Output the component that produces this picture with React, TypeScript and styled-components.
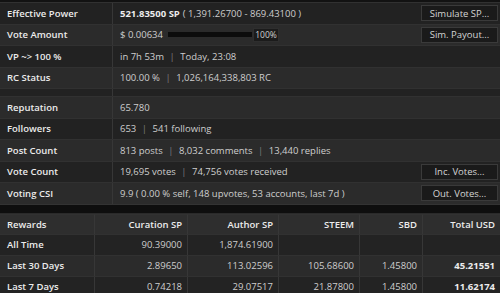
import React from 'react';
import styled, {createGlobalStyle, css} from 'styled-components';

const GlobalStyle = createGlobalStyle`
    body {
        margin: 0;
        background: #121212;
        font-family: "Open Sans", "Liberation Sans", sans-serif;
        font-size: 9.5px;
        color: #cecece;
    }
`;

const Page = styled.div`
    width: 500px;
    padding-top: 2px;
`;

const InfoTable = styled.div`
    display: flex;
    flex-direction: column;
`;

const Row = styled.div<{$light?: boolean; $h?: number}>`
    display: flex;
    box-sizing: border-box;
    height: ${(p) => p.$h ?? 21.5}px;
    background: ${(p) => (p.$light ? '#2b2b2b' : '#222222')};
    border-top: 1px solid #313131;
`;

const Label = styled.div`
    width: 113px;
    flex: none;
    box-sizing: border-box;
    display: flex;
    align-items: center;
    padding-left: 7px;
    border-right: 1px solid #373737;
    font-weight: 600;
    color: #ececec;
`;

const Value = styled.div`
    flex: 1;
    display: flex;
    align-items: center;
    padding: 0 2px 0 7px;
    white-space: nowrap;
`;

const Strong = styled.b`
    font-weight: 700;
    color: #ececec;
    margin-right: 3px;
`;

const Sep = styled.span`
    margin: 0 5.5px;
    color: #7c7c7c;
`;

const ActionButton = styled.button`
    margin-left: auto;
    width: 77px;
    height: 16px;
    padding: 0;
    background: #1a1a1a;
    border: 1px solid #3a3a3a;
    border-radius: 0;
    color: #d4d4d4;
    font: inherit;
`;

const VoteBar = styled.div`
    width: 84px;
    height: 5px;
    margin-left: 5px;
    background: #0c0c0c;
`;

const Percent = styled.div`
    margin-left: 1px;
    width: 26px;
    height: 14px;
    box-sizing: border-box;
    display: flex;
    align-items: center;
    justify-content: center;
    background: #1b1b1b;
    border: 1px solid #2e2e2e;
    font-size: 8.5px;
    color: #d0d0d0;
`;

const Band = styled.div`
    height: 10px;
    background: #0e0e0e;
    border-top: 1px solid #333;
    border-bottom: 1px solid #2a2a2a;
    box-sizing: border-box;
`;

const RewardsGrid = styled.div`
    display: grid;
    grid-template-columns: 95px 93px 91px 81px 63px 77px;
`;

const Cell = styled.div<{$bg: string; $head?: boolean; $bold?: boolean; $left?: boolean; $h: number}>`
    box-sizing: border-box;
    height: ${(p) => p.$h}px;
    display: flex;
    align-items: center;
    justify-content: ${(p) => (p.$left ? 'flex-start' : 'flex-end')};
    padding: 0 5px 0 7px;
    background: ${(p) => p.$bg};
    border-right: 1px solid #373737;
    border-top: 1px solid #313131;
    white-space: nowrap;
    ${(p) => (p.$head || p.$left) && css`
        font-weight: 600;
        color: #ececec;
    `}
    ${(p) => p.$bold && css`
        font-weight: 700;
        color: #ececec;
    `}
    &:nth-child(6n) {
        border-right: 0;
    }
`;

const headers = ['Rewards', 'Curation SP', 'Author SP', 'STEEM', 'SBD', 'Total USD'];

const rewards = [
    ['All Time', '90.39000', '1,874.61900', '', '', ''],
    ['Last 30 Days', '2.89650', '113.02596', '105.68600', '1.45800', '45.21551'],
    ['Last 7 Days', '0.74218', '29.07517', '21.87800', '1.45800', '11.62174'],
];

export default function App() {
    return (
        <Page>
            <GlobalStyle />
            <InfoTable>
                <Row>
                    <Label>Effective Power</Label>
                    <Value>
                        <Strong>521.83500 SP</Strong>( 1,391.26700 - 869.43100 )
                        <ActionButton>Simulate SP...</ActionButton>
                    </Value>
                </Row>
                <Row $light>
                    <Label>Vote Amount</Label>
                    <Value>
                        $ 0.00634
                        <VoteBar />
                        <Percent>100%</Percent>
                        <ActionButton>Sim. Payout...</ActionButton>
                    </Value>
                </Row>
                <Row>
                    <Label>VP ~&gt; 100 %</Label>
                    <Value>in 7h 53m<Sep>|</Sep>Today, 23:08</Value>
                </Row>
                <Row $light>
                    <Label>RC Status</Label>
                    <Value>100.00 %<Sep>|</Sep>1,026,164,338,803 RC</Value>
                </Row>
                <Row $h={8}>
                    <Label />
                    <Value />
                </Row>
                <Row $light>
                    <Label>Reputation</Label>
                    <Value>65.780</Value>
                </Row>
                <Row>
                    <Label>Followers</Label>
                    <Value>653<Sep>|</Sep>541 following</Value>
                </Row>
                <Row $light>
                    <Label>Post Count</Label>
                    <Value>813 posts<Sep>|</Sep>8,032 comments<Sep>|</Sep>13,440 replies</Value>
                </Row>
                <Row>
                    <Label>Vote Count</Label>
                    <Value>
                        19,695 votes<Sep>|</Sep>74,756 votes received
                        <ActionButton>Inc. Votes...</ActionButton>
                    </Value>
                </Row>
                <Row $light>
                    <Label>Voting CSI</Label>
                    <Value>
                        9.9 ( 0.00 % self, 148 upvotes, 53 accounts, last 7d )
                        <ActionButton>Out. Votes...</ActionButton>
                    </Value>
                </Row>
            </InfoTable>
            <Band />
            <RewardsGrid>
                {headers.map((h, i) => (
                    <Cell key={h} $head $left={i === 0} $bg='#2e2e2e' $h={20}>{h}</Cell>
                ))}
                {rewards.map((r, ri) => r.map((v, ci) => (
                    <Cell
                        key={`${ri}-${ci}`}
                        $left={ci === 0}
                        $bold={ci === 5}
                        $bg={ri % 2 ? '#2b2b2b' : '#232323'}
                        $h={21}
                    >
                        {v}
                    </Cell>
                )))}
            </RewardsGrid>
        </Page>
    );
}
